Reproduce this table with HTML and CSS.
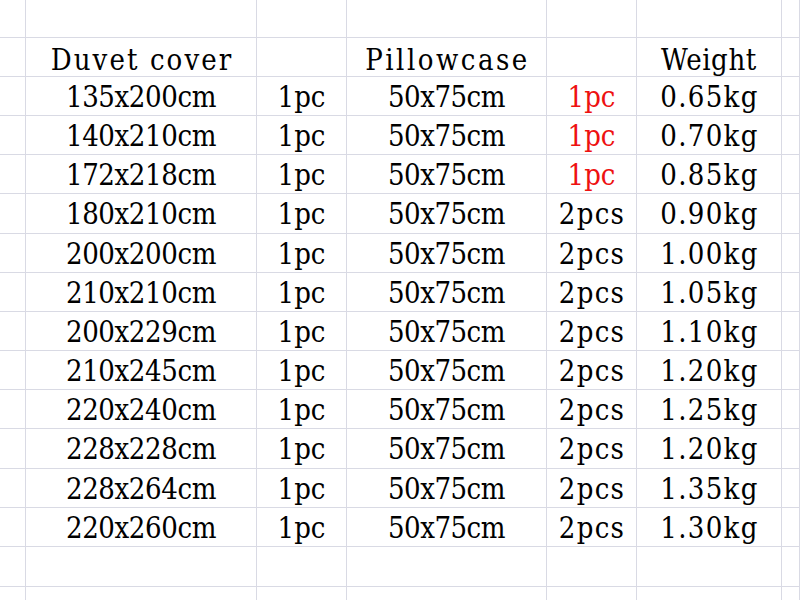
FILE: index.html
```html
<!DOCTYPE html>
<html>
<head>
<meta charset="utf-8">
<link rel="stylesheet" href="styles.css">
</head>
<body>
<div class="sheet">
  <div class="row top"><div class="c"></div><div class="c"></div><div class="c"></div><div class="c"></div><div class="c"></div><div class="c"></div><div class="c"></div></div>
  <div class="row head"><div class="c"></div><div class="c h1">Duvet cover</div><div class="c"></div><div class="c h3">Pillowcase</div><div class="c"></div><div class="c h5">Weight</div><div class="c"></div></div>
  <div class="row"><div class="c"></div><div class="c sz">135x200cm</div><div class="c">1pc</div><div class="c pw">50x75cm</div><div class="c red">1pc</div><div class="c w">0.65kg</div><div class="c"></div></div>
  <div class="row"><div class="c"></div><div class="c sz">140x210cm</div><div class="c">1pc</div><div class="c pw">50x75cm</div><div class="c red">1pc</div><div class="c w">0.70kg</div><div class="c"></div></div>
  <div class="row"><div class="c"></div><div class="c sz">172x218cm</div><div class="c">1pc</div><div class="c pw">50x75cm</div><div class="c red">1pc</div><div class="c w">0.85kg</div><div class="c"></div></div>
  <div class="row"><div class="c"></div><div class="c sz">180x210cm</div><div class="c">1pc</div><div class="c pw">50x75cm</div><div class="c p2">2pcs</div><div class="c w">0.90kg</div><div class="c"></div></div>
  <div class="row"><div class="c"></div><div class="c sz">200x200cm</div><div class="c">1pc</div><div class="c pw">50x75cm</div><div class="c p2">2pcs</div><div class="c w">1.00kg</div><div class="c"></div></div>
  <div class="row"><div class="c"></div><div class="c sz">210x210cm</div><div class="c">1pc</div><div class="c pw">50x75cm</div><div class="c p2">2pcs</div><div class="c w">1.05kg</div><div class="c"></div></div>
  <div class="row"><div class="c"></div><div class="c sz">200x229cm</div><div class="c">1pc</div><div class="c pw">50x75cm</div><div class="c p2">2pcs</div><div class="c w">1.10kg</div><div class="c"></div></div>
  <div class="row"><div class="c"></div><div class="c sz">210x245cm</div><div class="c">1pc</div><div class="c pw">50x75cm</div><div class="c p2">2pcs</div><div class="c w">1.20kg</div><div class="c"></div></div>
  <div class="row"><div class="c"></div><div class="c sz">220x240cm</div><div class="c">1pc</div><div class="c pw">50x75cm</div><div class="c p2">2pcs</div><div class="c w">1.25kg</div><div class="c"></div></div>
  <div class="row"><div class="c"></div><div class="c sz">228x228cm</div><div class="c">1pc</div><div class="c pw">50x75cm</div><div class="c p2">2pcs</div><div class="c w">1.20kg</div><div class="c"></div></div>
  <div class="row"><div class="c"></div><div class="c sz">228x264cm</div><div class="c">1pc</div><div class="c pw">50x75cm</div><div class="c p2">2pcs</div><div class="c w">1.35kg</div><div class="c"></div></div>
  <div class="row"><div class="c"></div><div class="c sz">220x260cm</div><div class="c">1pc</div><div class="c pw">50x75cm</div><div class="c p2">2pcs</div><div class="c w">1.30kg</div><div class="c"></div></div>
  <div class="row blank"><div class="c"></div><div class="c"></div><div class="c"></div><div class="c"></div><div class="c"></div><div class="c"></div><div class="c"></div></div>
  <div class="row blank"><div class="c"></div><div class="c"></div><div class="c"></div><div class="c"></div><div class="c"></div><div class="c"></div><div class="c"></div></div>
</div>
</body>
</html>
```
FILE: styles.css
```css
html, body {
  margin: 0;
  padding: 0;
  background: #ffffff;
  overflow: hidden;
}
.sheet {
  width: 800px;
  height: 600px;
  overflow: hidden;
  font-family: "DejaVu Serif Condensed", "DejaVu Serif", serif;
  font-stretch: condensed;
  font-size: 29px;
  color: #000000;
}
.row {
  display: grid;
  grid-template-columns: 26px 231px 90px 200px 90px 145px 18px;
  height: 39.17px;
}
.row.top { height: 38px; }
.row.head { height: 39px; }
.row.blank { height: 40px; }
.c {
  box-sizing: border-box;
  border-right: 1px solid #d9dae4;
  border-bottom: 1px solid #d9dae4;
  text-align: center;
  white-space: nowrap;
  line-height: 37px;
  padding-top: 2px;
  overflow: hidden;
}
.head .c {
  padding-top: 4px;
}
.h1 { letter-spacing: 2.1px; padding-left: 2px; }
.h3 { letter-spacing: 2.5px; padding-left: 2px; }
.h5 { letter-spacing: 0.6px; }
.sz { letter-spacing: -0.4px; }
.pw { letter-spacing: -0.5px; }
.red { color: #ee1111; }
.p2 { letter-spacing: 1.3px; padding-left: 1px; }
.w { letter-spacing: 1.3px; padding-left: 1px; }
```
